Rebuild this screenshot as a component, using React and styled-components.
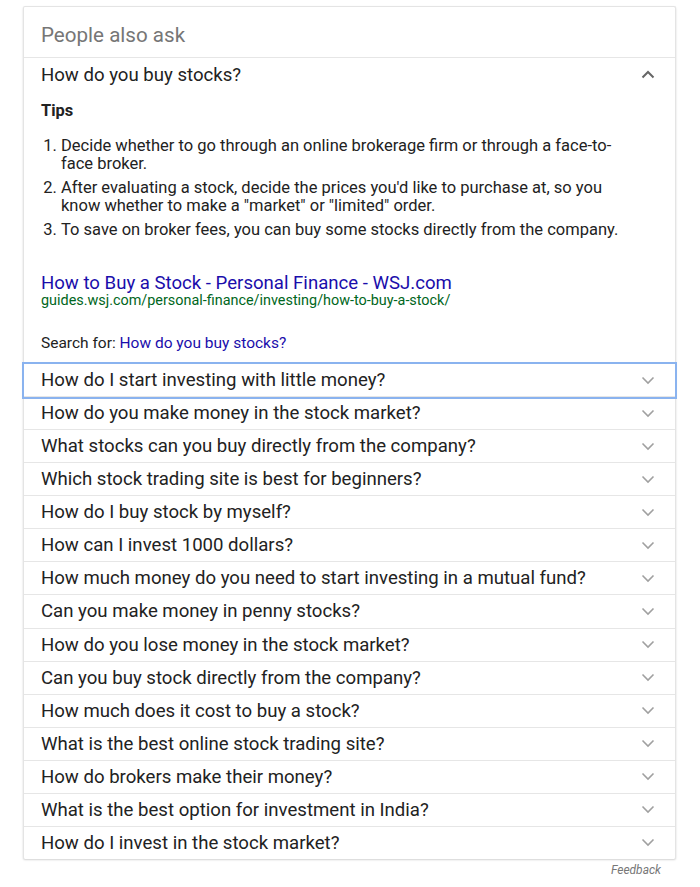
import styled, { createGlobalStyle } from 'styled-components';

const GlobalStyle = createGlobalStyle`
  body {
    margin: 0;
    background: #fff;
    font-family: Roboto, "Liberation Sans", Arial, sans-serif;
    color: #222;
  }
`;

const Page = styled.div`
  width: 653px;
  padding: 6px 0 0 23px;
`;

const Card = styled.div`
  border: 1px solid #e4e4e4;
  border-bottom: none;
  border-radius: 2px;
  box-shadow: 0 1px 2px rgba(0, 0, 0, 0.18);
  background: #fff;
`;

const Header = styled.div`
  height: 47px;
  padding: 3px 0 0 17px;
  line-height: 50px;
  font-size: 20.6px;
  color: #767676;
  border-bottom: 1px solid #e6e6e6;
`;

const Row = styled.div`
  display: flex;
  align-items: center;
  justify-content: space-between;
  height: 32.07px;
  padding: 0 20px 0 17px;
  font-size: 18.6px;
  color: #222;
  border-bottom: ${(p) => (p.$last ? 'none' : '1px solid #e6e6e6')};
  outline: ${(p) => (p.$focused ? '2px solid #8ab3ef' : 'none')};
  outline-offset: 0;
  position: relative;
`;

const OpenRow = styled(Row)`
  height: 33px;
  border-bottom: none;
`;

const Answer = styled.div`
  padding: 10px 17px 0;
  border-bottom: 1px solid #e6e6e6;
`;

const Tips = styled.div`
  font-size: 16.4px;
  font-weight: 700;
  line-height: 20px;
`;

const Steps = styled.ol`
  width: 560px;
  margin: 16px 0 0;
  padding-left: 20px;
  font-size: 16.5px;
  line-height: 18px;
  color: #222;

  li {
    margin-bottom: 6px;
  }
`;

const Source = styled.div`
  margin-top: 34px;
`;

const Title = styled.a`
  display: block;
  font-size: 18.6px;
  line-height: 20px;
  color: #1a0dab;
  text-decoration: none;
`;

const Url = styled.div`
  font-size: 14.4px;
  line-height: 16px;
  color: #006621;
`;

const SearchFor = styled.div`
  margin-top: 24px;
  padding-bottom: 10px;
  font-size: 15.5px;
  line-height: 20px;
  color: #222;

  a {
    color: #1a0dab;
    text-decoration: none;
  }
`;

const Feedback = styled.div`
  text-align: right;
  padding: 4px 15px 0 0;
  font-size: 12px;
  font-style: italic;
  color: #777;
`;

const Chevron = ({ up }) => (
  <svg width="14" height="9" viewBox="0 0 14 9">
    <path
      d={up ? 'M1.5 7.5 L7 2 L12.5 7.5' : 'M1.5 1.5 L7 7 L12.5 1.5'}
      fill="none"
      stroke={up ? '#666' : '#a0a0a0'}
      strokeWidth={up ? 2 : 1.6}
    />
  </svg>
);

const questions = [
  'How do I start investing with little money?',
  'How do you make money in the stock market?',
  'What stocks can you buy directly from the company?',
  'Which stock trading site is best for beginners?',
  'How do I buy stock by myself?',
  'How can I invest 1000 dollars?',
  'How much money do you need to start investing in a mutual fund?',
  'Can you make money in penny stocks?',
  'How do you lose money in the stock market?',
  'Can you buy stock directly from the company?',
  'How much does it cost to buy a stock?',
  'What is the best online stock trading site?',
  'How do brokers make their money?',
  'What is the best option for investment in India?',
  'How do I invest in the stock market?',
];

export default function App() {
  return (
    <Page>
      <GlobalStyle />
      <Card>
        <Header>People also ask</Header>
        <OpenRow>
          <span>How do you buy stocks?</span>
          <Chevron up />
        </OpenRow>
        <Answer>
          <Tips>Tips</Tips>
          <Steps>
            <li>Decide whether to go through an online brokerage firm or through a face-to-face broker.</li>
            <li>After evaluating a stock, decide the prices you'd like to purchase at, so you know whether to make a "market" or "limited" order.</li>
            <li>To save on broker fees, you can buy some stocks directly from the company.</li>
          </Steps>
          <Source>
            <Title href="#">How to Buy a Stock - Personal Finance - WSJ.com</Title>
            <Url>guides.wsj.com/personal-finance/investing/how-to-buy-a-stock/</Url>
          </Source>
          <SearchFor>
            Search for: <a href="#">How do you buy stocks?</a>
          </SearchFor>
        </Answer>
        {questions.map((q, i) => (
          <Row key={q} $focused={i === 0} $last={i === questions.length - 1}>
            <span>{q}</span>
            <Chevron />
          </Row>
        ))}
      </Card>
      <Feedback>Feedback</Feedback>
    </Page>
  );
}
